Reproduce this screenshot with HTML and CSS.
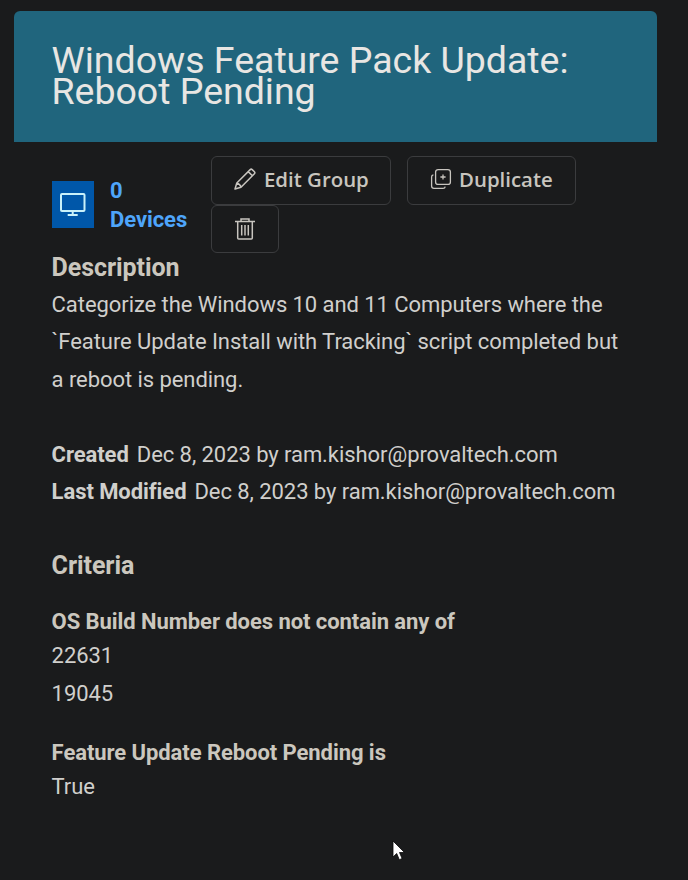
FILE: index.html
```html
<!DOCTYPE html>
<html lang="en">
<head>
<meta charset="utf-8">
<title>Device Group</title>
<link rel="stylesheet" href="styles.css">
</head>
<body>
<main class="card">
  <header class="card-header">
    <h1 class="title">Windows Feature Pack Update: Reboot Pending</h1>
  </header>
  <div class="card-body">
    <div class="toolbar">
      <a class="devices">
        <span class="device-icon">
          <svg width="42" height="47" viewBox="0 0 42 47" fill="none" stroke="#c9f1fa" stroke-width="2"><rect x="9" y="13" width="23.5" height="17" rx="1"/><path d="M20.7 30v3.5M15.7 34h10"/></svg>
        </span>
        <span class="device-count">0 Devices</span>
      </a>
      <div class="actions">
        <button class="btn btn-edit">
          <svg width="24" height="24" viewBox="0 0 24 24" fill="none" stroke="currentColor" stroke-width="1.5" stroke-linejoin="round"><path d="M2 22l1.8-6L17.2 2.6q1-1 2 0l2.2 2.2q1 1 0 2L8 20.2zM3.8 16q3.2.8 4.2 4.2M15.2 4.6l4.2 4.2"/></svg>
          Edit Group
        </button>
        <button class="btn btn-copy">
          <svg width="22" height="22" viewBox="0 0 22 22" fill="none" stroke="currentColor" stroke-width="1.3"><rect x="5.6" y="1.6" width="14.8" height="14.8" rx="2.5"/><path d="M3.4 6.8Q1.6 7 1.6 9v9q0 2.400 2.400 2.400h9q2 0 2.200-1.800"/><path d="M13 6.400v5.200M10.400 9h5.200"/></svg>
          Duplicate
        </button>
        <button class="btn btn-delete" aria-label="Delete">
          <svg width="22" height="24" viewBox="0 0 22 24" fill="none" stroke="currentColor" stroke-width="1.5"><path d="M1 4.5h20M7 4V2h8v2M3.7 4.5V21q0 1 1 1h12.600q1 0 1-1V4.500M7.700 8v10.500M11 8v10.500M14.300 8v10.500"/></svg>
        </button>
      </div>
    </div>
    <section>
      <h2 class="heading">Description</h2>
      <p class="description">Categorize the Windows 10 and 11 Computers where the `Feature Update Install with Tracking` script completed but a reboot is pending.</p>
      <p class="meta"><b>Created</b><span>Dec 8, 2023 by ram.kishor@provaltech.com</span></p>
      <p class="meta"><b>Last Modified</b><span>Dec 8, 2023 by ram.kishor@provaltech.com</span></p>
    </section>
    <section class="criteria">
      <h2 class="heading">Criteria</h2>
      <div class="criterion">
        <h3 class="criterion-name">OS Build Number does not contain any of</h3>
        <p>22631</p>
        <p>19045</p>
      </div>
      <div class="criterion">
        <h3 class="criterion-name">Feature Update Reboot Pending is</h3>
        <p>True</p>
      </div>
    </section>
  </div>
</main>
<svg class="cursor" width="14" height="22" viewBox="0 0 14 22"><path d="M1 1v16l3.700-3.500 2.600 6.200 2.800-1.200-2.600-6H12.500z" fill="#fff" stroke="#080808" stroke-width=".8"/></svg>
</body>
</html>
```
FILE: styles.css
```css
* { box-sizing: border-box; margin: 0; }
body {
  min-height: 880px;
  background: #1a1b1c;
  color: #d0cfcc;
  font: 22px/37.5px Roboto, sans-serif;
  letter-spacing: -0.065px;
}
.card { width: 643px; margin-left: 14px; padding-top: 11px; }
.card-header {
  height: 131px;
  padding: 34px 38px 0 37.5px;
  background: #20657d;
  border-radius: 6px 6px 0 0;
}
.title { color: #e8e6e3; font-size: 37.5px; font-weight: 400; line-height: 31.4px; letter-spacing: -0.02px; }
.card-body { padding: 14px 38px 0 37.6px; }
.toolbar { display: flex; height: 97px; margin-left: 0.4px; }
.devices { display: flex; align-items: center; width: 159px; height: 97px; color: #4ea5fa; font-weight: 700; line-height: 29px; }
.device-icon { display: flex; width: 42px; height: 47px; margin-right: 16px; background: #0057a9; }
.device-count { width: 80px; }
.actions { display: flex; flex-wrap: wrap; align-content: flex-start; column-gap: 16px; flex: 1; }
.btn {
  display: flex;
  align-items: center;
  height: 49px;
  padding: 0 22px 3px;
  border: 1px solid #3b3c3e;
  border-radius: 6px;
  background: transparent;
  color: #c8c5bf;
  font: 600 20.4px "Open Sans", sans-serif;
  white-space: nowrap;
}
.btn svg { flex: none; }
.btn-edit { width: 180px; padding-left: 21px; gap: 7px; }
.btn-copy { width: 169px; gap: 7px; }
.btn-delete { width: 68px; height: 48px; padding-bottom: 0; }
.heading { margin-bottom: 3.6px; color: #cbc7be; font-size: 25px; line-height: 29px; }
.description { margin-bottom: 37.5px; }
.meta { display: flex; gap: 8px; }
.criteria { margin-top: 40px; }
.criteria .heading { margin-bottom: 27.7px; }
.criterion { margin-bottom: 25.7px; }
.criterion-name { color: #cbc7be; font-size: 22px; line-height: 30px; }
.cursor { position: absolute; left: 392px; top: 840px; }
```
